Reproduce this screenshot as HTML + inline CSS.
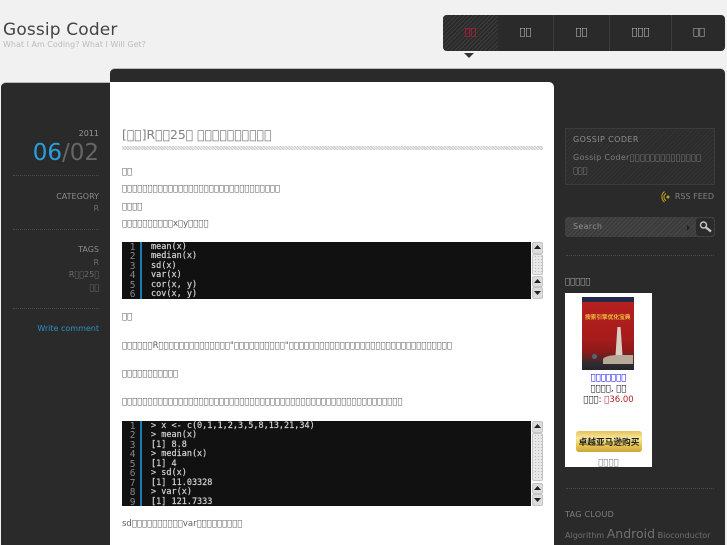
<!DOCTYPE html>
<html><head><meta charset="utf-8"><style>
html,body{margin:0;padding:0}
body{width:727px;height:545px;overflow:hidden;position:relative;background:#f1f1f1;font-family:"DejaVu Sans","Liberation Sans",sans-serif;font-size:8px;color:#777}
div,span.a,svg{position:absolute}
.l{white-space:nowrap;line-height:12px}
.p{font-size:8.5px;color:#5c5c5c}
.r{right:628px;text-align:right;white-space:nowrap;line-height:12px;color:#6e6e6e}
.h{color:#8a8a8a}
.d{height:0;border-top:1px dotted #4a4a4a}
.hatch{background:repeating-linear-gradient(135deg,#3c3c3c 0 1px,#2a2a2a 1px 3px)}
.n{top:27px;font-size:10px;line-height:12px;color:#bbb;text-align:center}
.v{top:15px;width:1px;height:36px;background:#3d3d3d}
.c{background:#111;color:#d4d4d4;font-family:"DejaVu Sans Mono","Liberation Mono",monospace;font-size:8.5px;line-height:9.45px;overflow:hidden;white-space:pre;-webkit-text-stroke:.2px #d4d4d4}
.c .nu{left:0;top:1px;width:13.5px;text-align:right;color:#888;font-size:9.5px;-webkit-text-stroke:0}
.c .bar{left:18px;top:0;bottom:0;width:2px;background:#1c7ab8}
.c .tx{left:29px;top:1px}
.sb{background:#dcdcdc;border-radius:2px;border:1px solid #c4c4c4;box-sizing:border-box}
.th{background:radial-gradient(circle,#bbb 0 .6px,transparent .8px) 1px 0/3px 3px,#e8e8e8}
</style></head><body>
<div class="l" style="left:3px;top:19px;font-size:17px;letter-spacing:.15px;line-height:22px;color:#444">Gossip Coder</div>
<div class="l" style="left:3px;top:39px;color:#bbb">What I Am Coding? What I Will Get?</div>

<div style="left:443px;top:15px;width:282px;height:36px;background:#2a2a2a;border-radius:4px"></div>
<div class="hatch" style="left:443px;top:15px;width:55px;height:36px;border-radius:4px 0 0 4px"></div>
<div class="v" style="left:553px"></div><div class="v" style="left:609px"></div><div class="v" style="left:671px"></div>
<div class="n" style="left:443px;width:55px;color:#e8142c">&#xE000;&#xE000;</div>
<div class="n" style="left:498px;width:55px">&#xE000;&#xE000;</div>
<div class="n" style="left:554px;width:55px">&#xE000;&#xE000;</div>
<div class="n" style="left:610px;width:61px">&#xE000;&#xE000;&#xE000;</div>
<div class="n" style="left:672px;width:54px">&#xE000;&#xE000;</div>
<svg style="left:464px;top:53px" width="10" height="5"><path d="M0 0H10L5 5Z" fill="#333"/></svg>

<div style="left:110px;top:68px;width:615px;height:477px;background:#2a2a2a;border-radius:5px 5px 0 0;border-top:1px solid #bbb;box-sizing:border-box"></div>
<div style="left:1px;top:82px;width:109px;height:463px;background:#2a2a2a;border-radius:5px 0 0 0;border-top:1px solid #bbb;box-sizing:border-box"></div>
<div style="left:110px;top:82px;width:444px;height:463px;background:#fff;border-radius:0 5px 0 0"></div>

<div class="r" style="top:128px;color:#999">2011</div>
<div class="r" style="top:139px;font-size:23px;line-height:28px;color:#666"><span style="color:#2a9fdc">06</span>/02</div>
<div class="d" style="left:13px;width:86px;top:175px"></div>
<div class="r h" style="top:191px">CATEGORY</div>
<div class="r" style="top:203px">R</div>
<div class="d" style="left:13px;width:86px;top:229px"></div>
<div class="r h" style="top:244px">TAGS</div>
<div class="r" style="top:257px">R</div>
<div class="r" style="top:269px">R&#xE000;&#xE000;25&#xE000;</div>
<div class="r" style="top:282px">&#xE000;&#xE000;</div>
<div class="d" style="left:13px;width:86px;top:308px"></div>
<div class="r" style="top:323px;color:#2a90c4">Write comment</div>

<div class="l" style="left:122px;top:127px;font-size:12.4px;line-height:16px;color:#808080">[&#xE000;&#xE000;]R&#xE000;&#xE000;25&#xE000; &#xE000;&#xE000;&#xE000;&#xE000;&#xE000;&#xE000;&#xE000;&#xE000;&#xE000;&#xE000;</div>
<div style="left:122px;top:146px;width:421px;height:4px;background:repeating-linear-gradient(45deg,#ccc 0 1px,#eee 1px 2px)"></div>

<div class="l p" style="left:122px;top:166px">&#xE000;&#xE000;</div>
<div class="l p" style="left:122px;top:183px">&#xE000;&#xE000;&#xE000;&#xE000;&#xE000;&#xE000;&#xE000;&#xE000;&#xE000;&#xE000;&#xE000;&#xE000;&#xE000;&#xE000;&#xE000;&#xE000;&#xE000;&#xE000;&#xE000;&#xE000;&#xE000;&#xE000;&#xE000;&#xE000;&#xE000;&#xE000;&#xE000;&#xE000;&#xE000;&#xE000;&#xE000;</div>
<div class="l p" style="left:122px;top:201px">&#xE000;&#xE000;&#xE000;&#xE000;</div>
<div class="l p" style="left:122px;top:218px">&#xE000;&#xE000;&#xE000;&#xE000;&#xE000;&#xE000;&#xE000;&#xE000;&#xE000;&#xE000;x&#xE000;y&#xE000;&#xE000;&#xE000;&#xE000;</div>

<div class="c" style="left:122px;top:242px;width:409px;height:57px"><div class="nu">1
2
3
4
5
6</div><div class="bar"></div><div class="tx">mean(x)
median(x)
sd(x)
var(x)
cor(x, y)
cov(x, y)</div></div>
<div class="sb" style="left:532px;top:242px;width:11px;height:12px"></div>
<svg style="left:534px;top:245px" width="7" height="5"><path d="M0 4H7L3.5 0Z" fill="#222"/></svg>
<div class="sb th" style="left:532px;top:254px;width:11px;height:21px"></div>
<div class="sb" style="left:532px;top:276px;width:11px;height:11px"></div>
<svg style="left:534px;top:279px" width="7" height="5"><path d="M0 4H7L3.5 0Z" fill="#222"/></svg>
<div class="sb" style="left:532px;top:287px;width:11px;height:12px"></div>
<svg style="left:534px;top:291px" width="7" height="5"><path d="M0 0H7L3.5 4Z" fill="#222"/></svg>

<div class="l p" style="left:122px;top:311px">&#xE000;&#xE000;</div>
<div class="l p" style="left:122px;top:340px">&#xE000;&#xE000;&#xE000;&#xE000;&#xE000;&#xE000;R&#xE000;&#xE000;&#xE000;&#xE000;&#xE000;&#xE000;&#xE000;&#xE000;&#xE000;&#xE000;&#xE000;&#xE000;&#xE000;&#xE000;"&#xE000;&#xE000;&#xE000;&#xE000;&#xE000;&#xE000;&#xE000;&#xE000;&#xE000;&#xE000;"&#xE000;&#xE000;&#xE000;&#xE000;&#xE000;&#xE000;&#xE000;&#xE000;&#xE000;&#xE000;&#xE000;&#xE000;&#xE000;&#xE000;&#xE000;&#xE000;&#xE000;&#xE000;&#xE000;&#xE000;&#xE000;&#xE000;&#xE000;&#xE000;&#xE000;&#xE000;&#xE000;&#xE000;&#xE000;&#xE000;&#xE000;&#xE000;</div>
<div class="l p" style="left:122px;top:368px">&#xE000;&#xE000;&#xE000;&#xE000;&#xE000;&#xE000;&#xE000;&#xE000;&#xE000;&#xE000;&#xE000;</div>
<div class="l p" style="left:122px;top:396px">&#xE000;&#xE000;&#xE000;&#xE000;&#xE000;&#xE000;&#xE000;&#xE000;&#xE000;&#xE000;&#xE000;&#xE000;&#xE000;&#xE000;&#xE000;&#xE000;&#xE000;&#xE000;&#xE000;&#xE000;&#xE000;&#xE000;&#xE000;&#xE000;&#xE000;&#xE000;&#xE000;&#xE000;&#xE000;&#xE000;&#xE000;&#xE000;&#xE000;&#xE000;&#xE000;&#xE000;&#xE000;&#xE000;&#xE000;&#xE000;&#xE000;&#xE000;&#xE000;&#xE000;&#xE000;&#xE000;&#xE000;&#xE000;&#xE000;&#xE000;&#xE000;&#xE000;&#xE000;&#xE000;&#xE000;</div>

<div class="c" style="left:122px;top:421px;width:409px;height:85px"><div class="nu">1
2
3
4
5
6
7
8
9</div><div class="bar"></div><div class="tx">&gt; x &lt;- c(0,1,1,2,3,5,8,13,21,34)
&gt; mean(x)
[1] 8.8
&gt; median(x)
[1] 4
&gt; sd(x)
[1] 11.03328
&gt; var(x)
[1] 121.7333</div></div>
<div class="sb" style="left:532px;top:421px;width:11px;height:12px"></div>
<svg style="left:534px;top:424px" width="7" height="5"><path d="M0 4H7L3.5 0Z" fill="#222"/></svg>
<div class="sb th" style="left:532px;top:433px;width:11px;height:48px"></div>
<div class="sb" style="left:532px;top:483px;width:11px;height:11px"></div>
<svg style="left:534px;top:486px" width="7" height="5"><path d="M0 4H7L3.5 0Z" fill="#222"/></svg>
<div class="sb" style="left:532px;top:494px;width:11px;height:12px"></div>
<svg style="left:534px;top:498px" width="7" height="5"><path d="M0 0H7L3.5 4Z" fill="#222"/></svg>
<div class="l p" style="left:122px;top:518px;color:#5c5c5c">sd&#xE000;&#xE000;&#xE000;&#xE000;&#xE000;&#xE000;&#xE000;&#xE000;&#xE000;&#xE000;var&#xE000;&#xE000;&#xE000;&#xE000;&#xE000;&#xE000;&#xE000;&#xE000;&#xE000;</div>

<div style="left:565px;top:128px;width:150px;height:57px;box-sizing:border-box;border:1px solid #3c3c3c;background:repeating-linear-gradient(135deg,#333 0 1px,#2c2c2c 1px 3px)"></div>
<div class="l" style="left:573px;top:134px;color:#8e8e8e;letter-spacing:.4px">GOSSIP CODER</div>
<div class="l" style="left:573px;top:152px;color:#7e7e7e;letter-spacing:.3px">Gossip Coder&#xE000;&#xE000;&#xE000;&#xE000;&#xE000;&#xE000;&#xE000;&#xE000;&#xE000;&#xE000;&#xE000;&#xE000;&#xE000;&#xE000;</div>
<div class="l" style="left:573px;top:165px;color:#7e7e7e">&#xE000;&#xE000;&#xE000;</div>
<svg style="left:660px;top:190px" width="12" height="13" fill="none" stroke="#c8a215" stroke-width="1"><circle cx="8" cy="7" r="1.5" fill="#c8a215" stroke="none"/><path d="M6 3.5A4 4 0 0 0 6 10.5M4.5 1.5A6.5 6.5 0 0 0 4.5 12"/></svg>
<div class="l" style="right:13px;top:191px;color:#808080">RSS FEED</div>

<div style="left:565px;top:217px;width:150px;height:20px;border-radius:3px;background:repeating-linear-gradient(135deg,#474747 0 1px,#3c3c3c 1px 3px)"></div>
<div class="l" style="left:573px;top:221px;color:#8f8f8f;letter-spacing:.3px">Search</div>
<div style="left:696px;top:218px;width:18px;height:18px;border-radius:3px;background:#2b2b2b"></div>
<svg style="left:698px;top:220px" width="15" height="14" fill="none" stroke="#c8c8c8"><circle cx="5.5" cy="5" r="3" stroke-width="1.4"/><path d="M8 7.5L13 11.5" stroke-width="2.2"/></svg>
<svg style="left:687px;top:225px" width="4" height="6"><path d="M0 0L3 3L0 6Z" fill="#222"/></svg>
<div class="d" style="left:566px;width:148px;top:255px"></div>

<div class="l" style="left:565px;top:276px;font-size:8.5px;color:#aaa">&#xE000;&#xE000;&#xE000;&#xE000;&#xE000;</div>
<div style="left:565px;top:293px;width:87px;height:174px;background:#fff"></div>
<div style="left:582px;top:297px;width:52px;height:73px;background:linear-gradient(180deg,#1f2b48 0 5px,#b5201f 5px,#a81c1c 55%,#8c1a18 75%,#2c2c30 92%,#22252c 100%);overflow:hidden">
<div class="l" style="left:3px;top:16px;font-family:'Noto Sans CJK SC',sans-serif;font-size:5.7px;line-height:8px;color:#f0c040;font-weight:700">搜索引擎优化宝典</div>
<div style="left:33px;top:30px;width:8px;height:36px;background:#d8d0c4;clip-path:polygon(30% 0,70% 0,100% 100%,0 100%)"></div>
<div style="left:21px;top:58px;width:30px;height:9px;background:#b8a898;border-radius:50% 0 0 0"></div>
<div style="left:10px;top:57px;width:5px;height:5px;border-radius:50%;background:#567"></div>
</div>
<div class="l" style="left:565px;width:87px;text-align:center;top:372px;color:#00f;font-size:8.5px">&#xE000;&#xE000;&#xE000;&#xE000;&#xE000;&#xE000;&#xE000;</div>
<div class="l" style="left:565px;width:87px;text-align:center;top:383px;color:#111;font-size:8.5px">&#xE000;&#xE000;&#xE000;&#xE000;, &#xE000;&#xE000;</div>
<div class="l" style="left:565px;width:87px;text-align:center;top:394px;color:#111;font-size:8.5px">&#xE000;&#xE000;&#xE000;: <span style="color:#a22">&#xE000;36.00</span></div>
<div style="left:576px;top:431px;width:66px;height:21px;border-radius:3px;background:linear-gradient(180deg,#e4c35e,#f7e79c 35%,#e8c44c 70%,#c9a63a);text-align:center;font-family:'Noto Sans CJK SC',sans-serif;font-size:8.7px;line-height:21px;color:#222;font-weight:700;white-space:nowrap">卓越亚马逊购买</div>
<div class="l" style="left:565px;width:87px;text-align:center;top:457px;color:#777;font-size:8.5px">&#xE000;&#xE000;&#xE000;&#xE000;</div>
<div class="d" style="left:566px;width:148px;top:488px"></div>
<div class="l" style="left:565px;top:509px;color:#808080;letter-spacing:.3px">TAG CLOUD</div>
<div class="l" style="left:565px;top:525px;line-height:18px;color:#707070">Algorithm <span style="font-size:12.5px">Android</span> Bioconductor</div>
</body></html>
